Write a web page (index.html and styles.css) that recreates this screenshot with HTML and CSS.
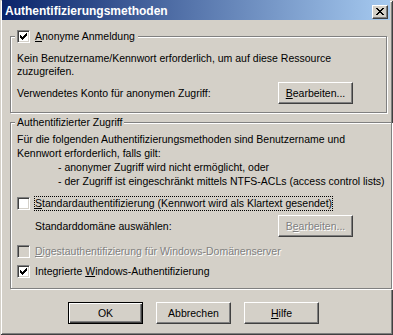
FILE: index.html
```html
<!DOCTYPE html>
<html lang="de">
<head>
    <meta charset="UTF-8">
    <meta name="viewport" content="width=device-width, initial-scale=1.0">
    <title>Authentifizierungsmethoden</title>
    <link rel="stylesheet" href="styles.css">
</head>
<body>
    <div class="window">
        <div class="titlebar">
            <span class="title">Authentifizierungsmethoden</span>
            <button class="close" aria-label="Schließen">
                <svg width="8" height="7" viewBox="0 0 8 7" shape-rendering="crispEdges">
                    <path fill="#000" d="M0 0h2v1H0z M6 0h2v1H6z M1 1h2v1H1z M5 1h2v1H5z M2 2h4v1H2z M3 3h2v1H3z M2 4h4v1H2z M1 5h2v1H1z M5 5h2v1H5z M0 6h2v1H0z M6 6h2v1H6z"/>
                </svg>
            </button>
        </div>

        <div class="content">
            <fieldset class="group group-anon">
                <legend>
                    <label class="check">
                        <span class="box"><svg class="tick" viewBox="0 0 7 7" shape-rendering="crispEdges"><path d="M6 0h1v1H6z M5 1h2v1H5z M0 2h1v1H0z M4 2h3v1H4z M0 3h2v1H0z M3 3h3v1H3z M0 4h5v1H0z M1 5h3v1H1z M2 6h1v1H2z"/></svg></span>
                        <span class="label"><u>A</u>nonyme Anmeldung</span>
                    </label>
                </legend>
                <p class="text">Kein Benutzername/Kennwort erforderlich, um auf diese Ressource<br>zuzugreifen.</p>
                <div class="row">
                    <span class="row-label">Verwendetes Konto für anonymen Zugriff:</span>
                    <button class="btn"><u>B</u>earbeiten...</button>
                </div>
            </fieldset>

            <fieldset class="group group-auth">
                <legend>Authentifizierter Zugriff</legend>
                <p class="text">Für die folgenden Authentifizierungsmethoden sind Benutzername und<br>Kennwort erforderlich, falls gilt:</p>
                <ul class="conditions">
                    <li>- anonymer Zugriff wird nicht ermöglicht, oder</li>
                    <li>- der Zugriff ist eingeschränkt mittels NTFS-ACLs (access control lists)</li>
                </ul>

                <label class="check check-basic">
                    <span class="box"></span>
                    <span class="label focused"><u>S</u>tandardauthentifizierung (Kennwort wird als Klartext gesendet)</span>
                </label>
                <div class="row row-domain">
                    <span class="row-label">Standarddomäne auswählen:</span>
                    <button class="btn" disabled>B<u>e</u>arbeiten...</button>
                </div>
                <label class="check check-digest disabled">
                    <span class="box"></span>
                    <span class="label"><u>D</u>igestauthentifizierung für Windows-Domänenserver</span>
                </label>
                <label class="check check-windows">
                    <span class="box"><svg class="tick" viewBox="0 0 7 7" shape-rendering="crispEdges"><path d="M6 0h1v1H6z M5 1h2v1H5z M0 2h1v1H0z M4 2h3v1H4z M0 3h2v1H0z M3 3h3v1H3z M0 4h5v1H0z M1 5h3v1H1z M2 6h1v1H2z"/></svg></span>
                    <span class="label">Integrierte <u>W</u>indows-Authentifizierung</span>
                </label>
            </fieldset>

            <div class="actions">
                <button class="btn btn-default">OK</button>
                <button class="btn">Abbrechen</button>
                <button class="btn"><u>H</u>ilfe</button>
            </div>
        </div>
    </div>
</body>
</html>
```

FILE: styles.css
```css
* {
    margin: 0;
    padding: 0;
    box-sizing: border-box;
}

body {
    font-family: "Liberation Sans", Arial, sans-serif;
    font-size: 10.5px;
    color: #000;
    background-color: #d4d0c8;
}

.window {
    width: 393px;
    height: 335px;
    padding: 0 3px 3px 2px;
    background-color: #d4d0c8;
    box-shadow: inset 1px 1px 0 #d4d0c8, inset -1px -1px 0 #404040,
                inset 2px 2px 0 #fff, inset -2px -2px 0 #808080;
}

/* title bar */
.titlebar {
    height: 20px;
    display: flex;
    justify-content: space-between;
    align-items: flex-start;
    padding: 0 2px 0 3px;
    background: linear-gradient(to right, #0a246a 0%, #a6caf0 100%);
}

.title {
    color: #fff;
    font-size: 12px;
    font-weight: bold;
    line-height: 14px;
    padding-top: 4px;
}

.close {
    width: 16px;
    height: 14px;
    margin-top: 5px;
    display: flex;
    align-items: center;
    justify-content: center;
    padding: 0 1px 1px 0;
    background: #d4d0c8;
    border: 1px solid;
    border-color: #fff #404040 #404040 #fff;
    box-shadow: inset -1px -1px 0 #808080;
}

.close svg {
    display: block;
}

/* body */
.content {
    padding: 10px 0 0 8px;
}

.group {
    width: 377px;
    border: 1px solid #808080;
    box-shadow: inset 1px 1px 0 #fff, 1px 1px 0 #fff;
    padding: 0 6px 8px;
    white-space: nowrap;
}

.group legend {
    margin-left: -2px;
    padding: 0 2px;
    line-height: 13px;
    background-color: #d4d0c8;
}

.group legend .check {
    height: 13px;
}

.group-anon {
    padding-top: 9px;
}

.group-auth {
    margin-top: 3px;
    padding-top: 3px;
    padding-bottom: 9px;
}

.text {
    line-height: 13px;
}

.group-auth .text,
.conditions {
    line-height: 14px;
}

.conditions {
    list-style: none;
    padding-left: 41px;
}

.row {
    display: flex;
    align-items: center;
    height: 22px;
    margin-top: 4px;
    line-height: 13px;
}

.row-label {
    width: 261px;
}

.row-domain {
    padding-left: 18px;
}

.row-domain .row-label {
    width: 243px;
}

/* checkboxes */
.check {
    display: flex;
    align-items: center;
    gap: 4px;
    height: 15px;
    line-height: 13px;
}

.box {
    width: 13px;
    height: 13px;
    padding: 2px;
    background: #fff;
    border: 1px solid;
    border-color: #808080 #fff #fff #808080;
    box-shadow: inset 1px 1px 0 #404040, inset -1px -1px 0 #d4d0c8;
}

.tick {
    display: block;
    width: 7px;
    height: 7px;
    fill: #000;
}

.label {
    border: 1px dotted transparent;
}

.label.focused {
    border-color: #000;
}

.check-basic {
    margin-top: 8px;
}

.check-digest {
    margin-top: 7px;
}

.check-windows {
    margin-top: 5px;
}

.disabled .box {
    background: #d4d0c8;
}

.disabled .label,
.btn:disabled {
    color: #808080;
    text-shadow: 1px 1px 0 #fff;
}

/* buttons */
.btn {
    width: 75px;
    height: 22px;
    font: inherit;
    color: #000;
    background: #d4d0c8;
    border: 1px solid;
    border-color: #fff #404040 #404040 #fff;
    box-shadow: inset -1px -1px 0 #808080;
}

.btn-default {
    border-color: #000;
    box-shadow: inset 1px 1px 0 #fff, inset -1px -1px 0 #404040, inset -2px -2px 0 #808080;
}

.actions {
    display: flex;
    gap: 13px;
    margin-top: 13px;
    padding-left: 58px;
}
```
